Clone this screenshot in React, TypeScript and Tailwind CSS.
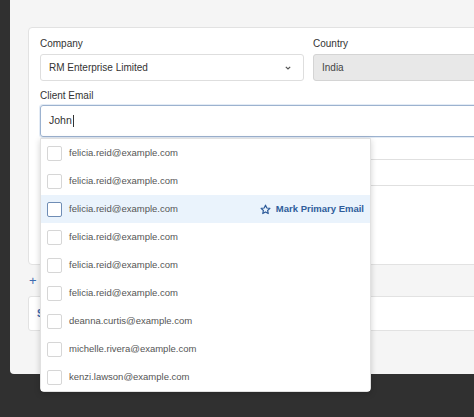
import React from "react";

const emails = [
  "felicia.reid@example.com",
  "felicia.reid@example.com",
  "felicia.reid@example.com",
  "felicia.reid@example.com",
  "felicia.reid@example.com",
  "felicia.reid@example.com",
  "deanna.curtis@example.com",
  "michelle.rivera@example.com",
  "kenzi.lawson@example.com",
];

function Star() {
  return (
    <svg width="11" height="11" viewBox="0 0 24 24" fill="none" stroke="#2c5a99" strokeWidth="2.6" strokeLinejoin="round">
      <path d="M12 2.5l2.9 6.2 6.7.8-5 4.6 1.4 6.7L12 17.4l-6 3.4 1.4-6.7-5-4.6 6.7-.8z" />
    </svg>
  );
}

export default function App() {
  return (
    <div
      className="w-[474px] h-[417px] bg-[#303030] overflow-hidden pl-[10px]"
      style={{ fontFamily: '"Liberation Sans", Arial, sans-serif' }}
    >
      <div className="w-[480px] h-[374px] bg-[#f5f5f5] rounded-b-[4px] pt-[27px] pl-[18px] flex flex-col">
        <div className="relative w-[470px] h-[238px] bg-white border border-[#e2e2e2] rounded-[4px] px-[11px] pt-[9px]">
          <div className="flex gap-[9px]">
            <div className="w-[264px] flex flex-col">
              <div className="text-[10px] leading-[14px] text-[#333]">Company</div>
              <div className="mt-[3px] h-[27px] border border-[#dedede] rounded-[3px] flex items-center justify-between pl-[8px] pr-[12px] text-[10px] text-[#333]">
                <span>RM Enterprise Limited</span>
                <svg width="6" height="4" viewBox="0 0 6 4">
                  <path d="M0.8 0.8L3 3L5.2 0.8" fill="none" stroke="#555" strokeWidth="1.2" />
                </svg>
              </div>
            </div>
            <div className="flex-1 flex flex-col">
              <div className="text-[10px] leading-[14px] text-[#333]">Country</div>
              <div className="mt-[3px] h-[27px] border border-[#d4d4d4] bg-[#e8e8e8] rounded-[3px] flex items-center pl-[8px] text-[10px] text-[#444]">
                India
              </div>
            </div>
          </div>
          <div className="mt-[8px] text-[10px] leading-[14px] text-[#333]">Client Email</div>
          <div className="mt-[2px] h-[32px] border border-[#9cb2cf] rounded-[3px] shadow-[0_0_0_1px_#e3ebf5] flex items-center pl-[8px] text-[10.5px] text-[#333]">
            John<span className="ml-[1px] w-[1px] h-[12px] bg-[#333]" />
          </div>
          <div className="mt-[8px] text-[10px] leading-[14px] text-[#333]">Phone</div>
          <div className="h-[27px] border border-[#e0e0e0] rounded-[3px]" />

          <div className="absolute left-[11px] top-[110px] w-[331px] bg-white border border-[#e1e1e1] rounded-b-[4px] shadow-[0_2px_6px_rgba(0,0,0,0.18)] z-10 flex flex-col">
            {emails.map((e, i) => {
              const active = i === 2;
              return (
                <div
                  key={i}
                  className={
                    "h-[28px] flex items-center pl-[6px] pr-[6px] " +
                    (active ? "bg-[#eaf3fc]" : "bg-white")
                  }
                >
                  <div
                    className={
                      "w-[15px] h-[15px] rounded-[2px] bg-white " +
                      (active ? "border-[1.5px] border-[#6f8db5]" : "border border-[#d6d6d6]")
                    }
                  />
                  <span className="ml-[7px] text-[9.5px] text-[#555]">{e}</span>
                  {active && (
                    <div className="ml-auto flex items-center gap-[5px]">
                      <Star />
                      <span className="text-[9.5px] font-bold text-[#2f5d9b]">Mark Primary Email</span>
                    </div>
                  )}
                </div>
              );
            })}
          </div>
        </div>
        <div className="h-[31px] flex items-center pl-[1px] text-[13px] text-[#3d6bb0]">
          <span>+</span>
          <span className="ml-[4px] text-[10px] font-bold">Add Contact</span>
        </div>
        <div className="w-[470px] h-[35px] bg-white border border-[#e2e2e2] rounded-[3px] flex items-center pl-[8px] text-[10px] font-bold text-[#3d6bb0]">
          Save
        </div>
      </div>
    </div>
  );
}
